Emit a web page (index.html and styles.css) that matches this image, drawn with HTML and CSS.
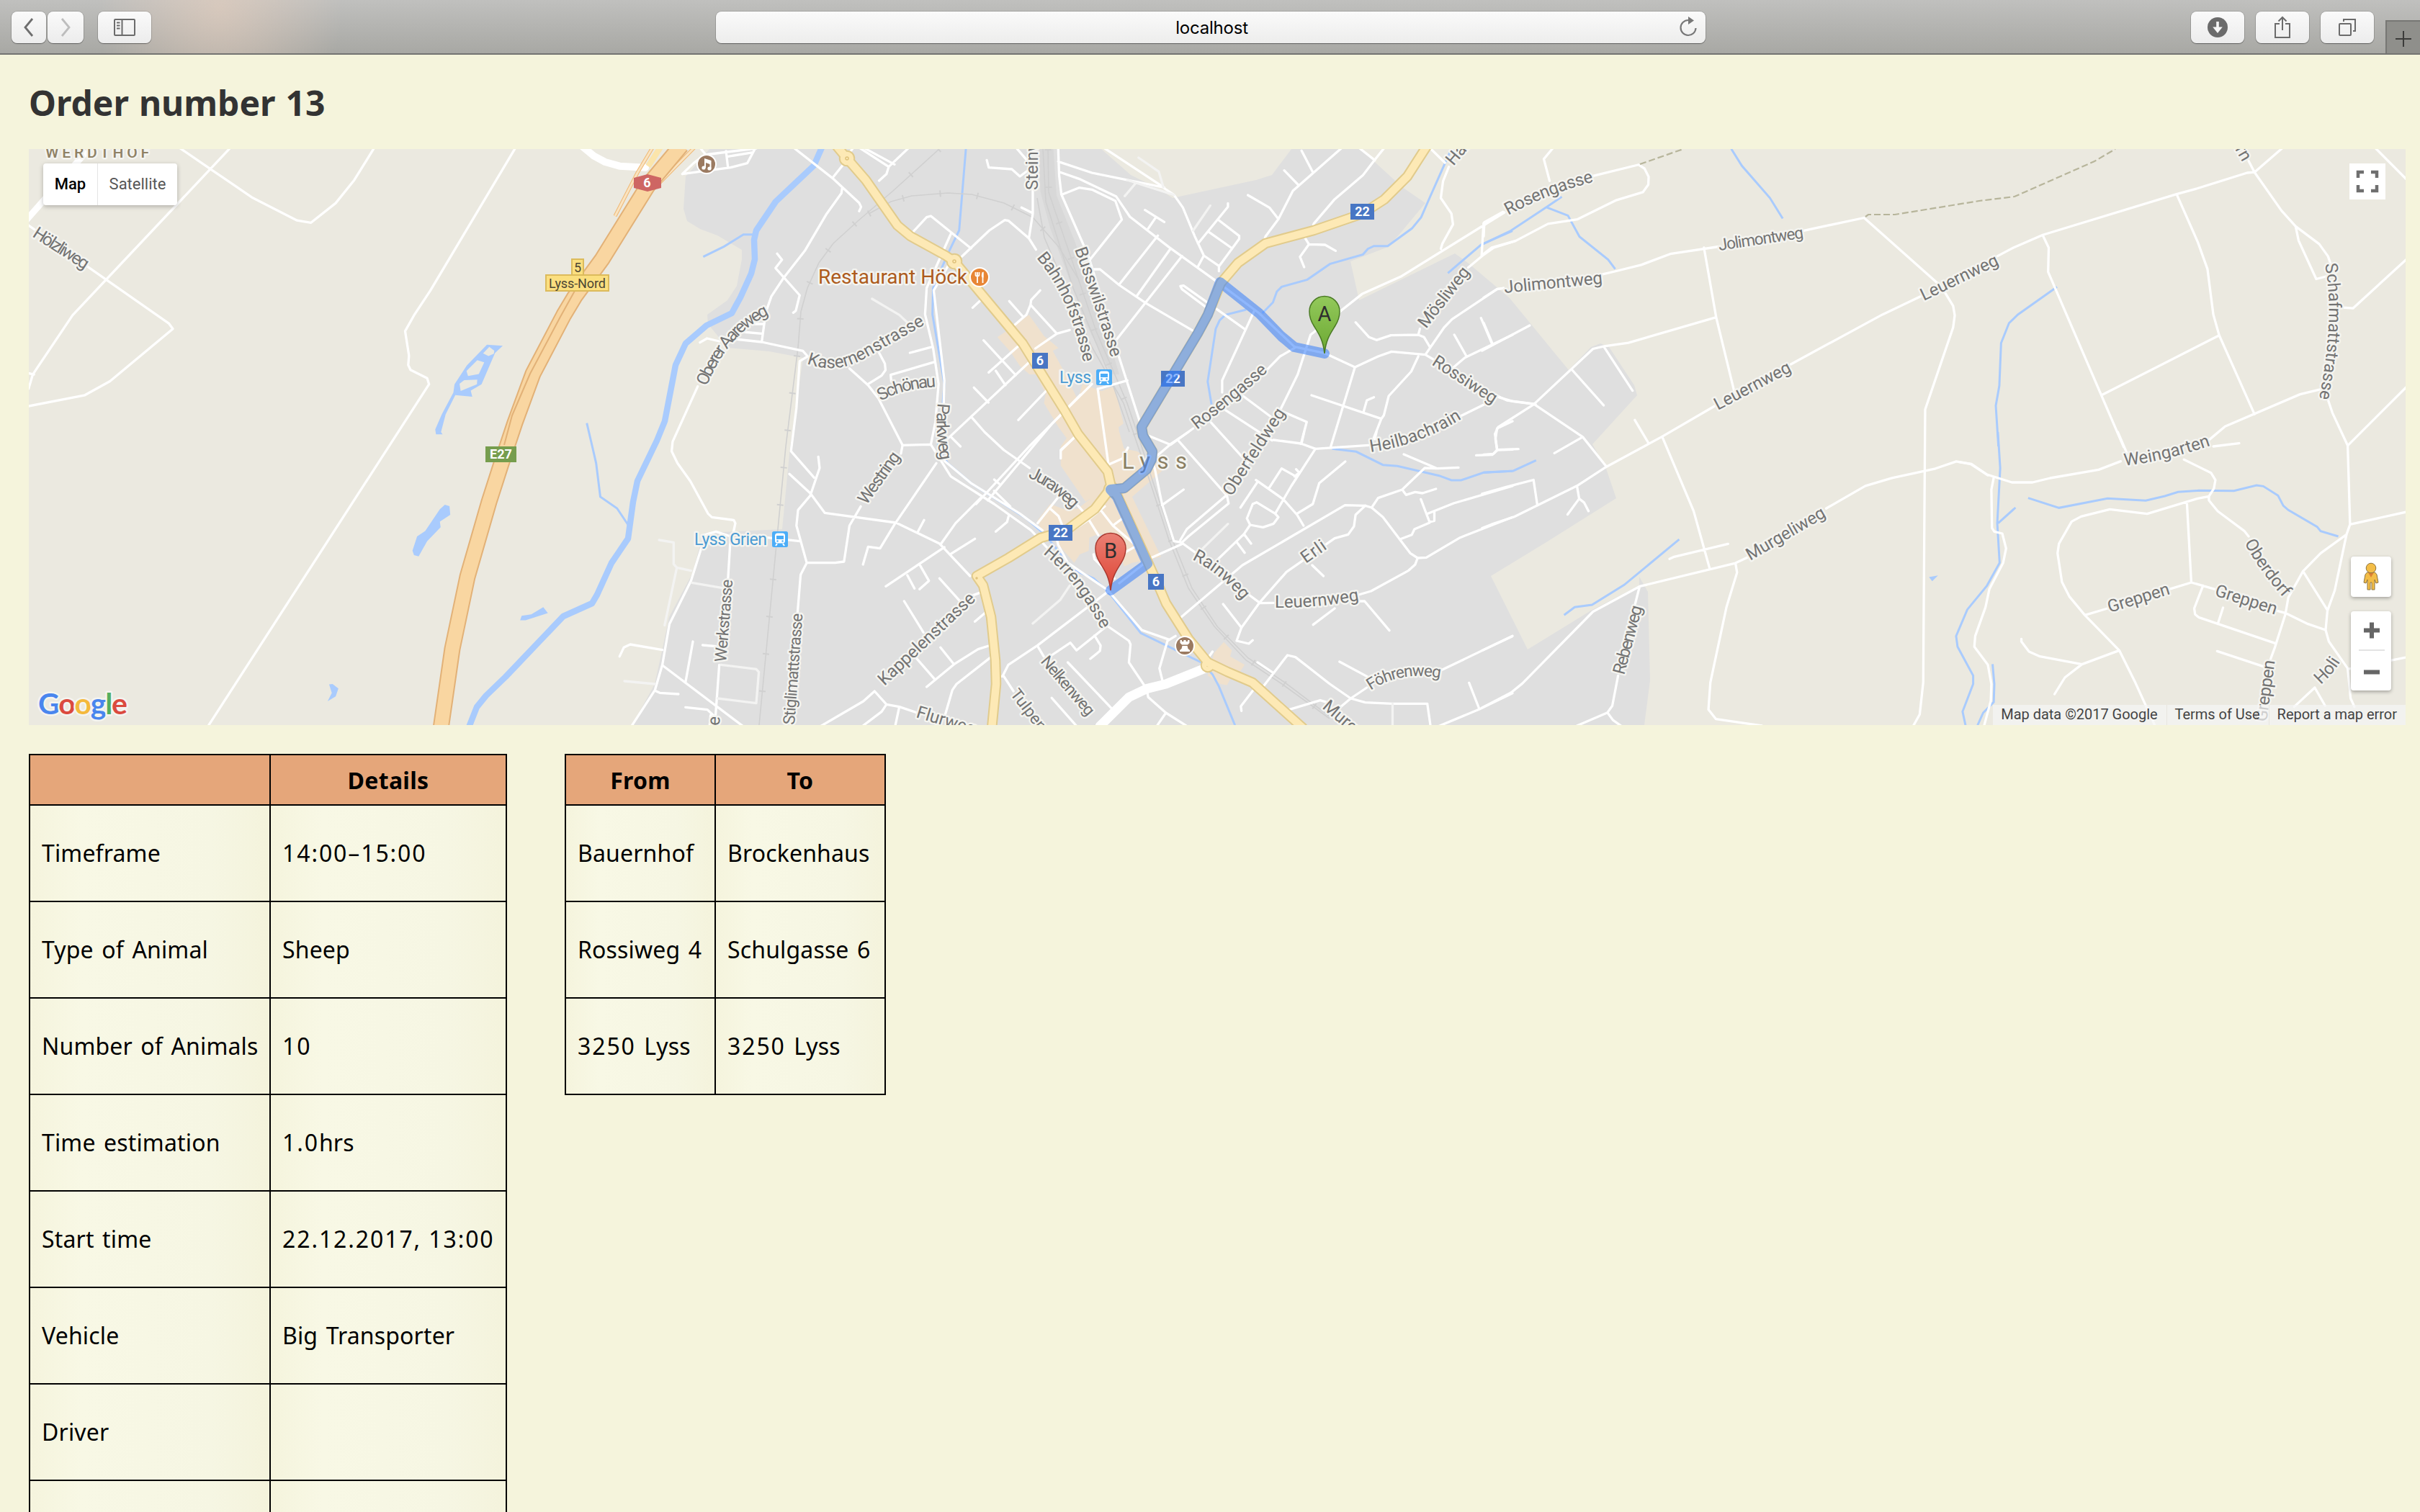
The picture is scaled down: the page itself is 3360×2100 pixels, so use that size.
FILE: index.html
```html
<!DOCTYPE html>
<html lang="en">
<head>
<meta charset="utf-8">
<title>Order number 13</title>
<link rel="stylesheet" href="styles.css">
</head>
<body>
<header class="toolbar">
  <div class="nav">
    <button class="btn back" aria-label="Back"><svg width="16" height="28" viewBox="0 0 16 28"><path d="M13 2 3 14l10 12" fill="none" stroke="#6e6e6e" stroke-width="2.8"/></svg></button>
    <button class="btn fwd" aria-label="Forward"><svg width="16" height="28" viewBox="0 0 16 28"><path d="M3 2l10 12L3 26" fill="none" stroke="#bdbdbd" stroke-width="2.8"/></svg></button>
    <button class="btn side" aria-label="Sidebar"><svg width="32" height="26" viewBox="0 0 32 26" fill="none" stroke="#6b6b6b" stroke-width="2"><rect x="2" y="2" width="28" height="22" rx="1"/><path d="M12.500 2v22M5 6.500h4.500M5 10.500h4.500M5 14.500h4.500"/></svg></button>
  </div>
  <div class="address"><span>localhost</span>
    <svg class="reload" width="26" height="30" viewBox="0 0 26 30"><path d="M13 5A10.500 10.500 0 1 0 23.500 16" fill="none" stroke="#777" stroke-width="2.200"/><path d="M13 0l8 5.500-8 5.500z" fill="#777"/></svg>
  </div>
  <div class="tools">
    <button class="btn" aria-label="Downloads"><svg width="30" height="30" viewBox="0 0 30 30"><circle cx="15" cy="15" r="14" fill="#6b6b6b"/><path d="M13.200 7h3.600v7.500h5L15 23l-6.800-8.500h5z" fill="#f7f7f7"/></svg></button>
    <button class="btn" aria-label="Share"><svg width="26" height="34" viewBox="0 0 26 34" fill="none" stroke="#6b6b6b" stroke-width="2"><path d="M9 12H3v19h20V12h-6M13 21V3M7.500 8.500 13 3l5.500 5.500"/></svg></button>
    <button class="btn" aria-label="Tabs"><svg width="26" height="26" viewBox="0 0 26 26" fill="none" stroke="#6b6b6b" stroke-width="2"><rect x="2" y="8" width="16" height="16" rx="1"/><path d="M8 5V2h16v16h-3"/></svg></button>
  </div>
  <button class="newtab" aria-label="New tab"><svg width="24" height="24" viewBox="0 0 24 24"><path d="M12 1v22M1 12h22" stroke="#3c3c3a" stroke-width="2"/></svg></button>
</header>

<main>
<h1>Order number 13</h1>

<div class="map">
<svg class="canvas" width="3300" height="800" viewBox="40 207 3300 800">
<defs>
  <linearGradient id="ga" x1="0" y1="0" x2="0" y2="1"><stop offset="0" stop-color="#93c95b"/><stop offset="1" stop-color="#6ba832"/></linearGradient>
  <linearGradient id="gb" x1="0" y1="0" x2="0" y2="1"><stop offset="0" stop-color="#ea8074"/><stop offset="1" stop-color="#de4434"/></linearGradient>
  <path id="p1" d="M44 328 130 383"/>
  <path id="p2" d="M981 537Q1012 460 1074 434"/>
  <path id="p3" d="M1120 505C1150 516 1175 512 1200 498L1298 443"/>
  <path id="p4" d="M1223 557Q1255 538 1310 537"/>
  <path id="p5" d="M1302 560Q1297 600 1308 650"/>
  <path id="p6" d="M1203 702 1258 624"/>
  <path id="p7" d="M1427 663Q1462 677 1496 715"/>
  <path id="p8" d="M1439 358Q1488 415 1506 513"/>
  <path id="p9" d="M1492 346Q1522 430 1546 507"/>
  <path id="p10" d="M1441 264V150"/>
  <path id="p11" d="M1662 597Q1716 556 1768 509"/>
  <path id="p12" d="M1710 690 1791 564"/>
  <path id="p13" d="M1903 628Q1975 618 2038 576"/>
  <path id="p14" d="M1987 506 2083 568"/>
  <path id="p15" d="M1980 457 2048 370"/>
  <path id="p16" d="M2018 231 2070 170"/>
  <path id="p17" d="M2094 299Q2150 268 2222 250"/>
  <path id="p18" d="M2089 407 2234 393"/>
  <path id="p19" d="M2387 348 2514 329"/>
  <path id="p20" d="M2385 570 2497 511"/>
  <path id="p21" d="M2671 418 2785 363"/>
  <path id="p22" d="M2430 779 2545 712"/>
  <path id="p23" d="M2255 938 2283 833"/>
  <path id="p24" d="M2950 647Q3010 640 3077 616"/>
  <path id="p25" d="M3116 754Q3139 796 3175 835"/>
  <path id="p26" d="M2929 851 3023 822"/>
  <path id="p27" d="M3074 827 3169 857"/>
  <path id="p28" d="M3147 1003 3160 908"/>
  <path id="p29" d="M3222 951Q3238 938 3252 915"/>
  <path id="p30" d="M3228 367Q3243 445 3218 563"/>
  <path id="p31" d="M3103 207 3125 245"/>
  <path id="p32" d="M1813 783 1850 757"/>
  <path id="p33" d="M1655 777Q1695 796 1731 841"/>
  <path id="p34" d="M1770 844Q1830 845 1896 832"/>
  <path id="p35" d="M1903 959Q1945 930 2006 943"/>
  <path id="p36" d="M1835 983 1930 1065"/>
  <path id="p37" d="M1448 769Q1495 806 1534 883"/>
  <path id="p38" d="M1444 919 1518 1005"/>
  <path id="p39" d="M1402 964 1480 1065"/>
  <path id="p40" d="M1271 996 1380 1029"/>
  <path id="p41" d="M1228 953 1362 827"/>
  <path id="p42" d="M1008 920 1018 797"/>
  <path id="p43" d="M1103 1007 1115 843"/>
  <path id="p44" d="M999 1008 1001 960"/>
</defs>

<rect x="40" y="207" width="3300" height="800" fill="#ebe9e0"/>
<!-- built-up area -->
<path fill="#dfdfdf" d="M985 207 970 225 952 245 949 290 954 307 972 318 996 327 1030 347V360L1023 397 1010 417 982 437 983 450 1010 483 1068 488 1115 497 1097 620 1086 735 979 740 972 757 961 797 929 857 920 900 909 950 878 1007H2283L2291 945 2288 822 2276 801V813L2209 848 2121 902 2070 800 2147 753 2244 692 2230 651 2211 617 2273 549 2269 535 2234 482 2222 477 2209 482 2178 514 2096 414 2038 365 2020 352 1887 417 1875 363 1927 343 1945 323 1979 282 1947 260 1889 207H1793L1766 243 1744 250 1628 275 1610 263 1570 243 1529 207Z"/>
<g fill="#f0e1cd">
  <path transform="translate(800 200) scale(.446429 .333333)" d="M1408 712 1455 800 1500 850 1482 862 1510 930 1560 1065 1575 1000 1634 1030 1674 1010 1702 1165 1687 1180 1694 1262H1545L1500 1180 1455 1080 1460 1040 1430 960 1410 960 1380 925 1350 865 1310 805 1365 755Z"/>
  <path transform="translate(1400 600) scale(.446429 .333333)" d="M195 0 163 60V140L240 290 258 275 215 320H170L130 300 90 370 100 400 150 460 205 545 222 510 250 495 252 440 280 425H330L360 560 385 545 440 530 475 520 385 270 480 160 460 130 400 80 360 70 345 0ZM670 875 695 910 690 935 735 970 715 1010 690 1030 680 1055 660 1050 620 1015 640 920Z"/>
</g>

<!-- water -->
<g class="water">
  <path class="river" d="M651 1010 662 982 675 966 702 940 782 856 822 838 829 826 849 782 872 748 879 697 885 668 912 612 923 585 938 507 952 477 981 452 1016 435 1028 413 1043 380 1048 360 1047 333 1050 320 1077 280 1130 230 1141 205"/>
  <g transform="translate(0 200) scale(.535714 .522959)">
    <path class="pond" d="M1262 533 1303 536 1283 555 1248 638 1220 655 1224 671 1180 667 1155 718 1143 765 1147 771H1130L1128 758 1145 718 1175 660 1178 638 1210 588ZM1268 539 1281 549 1280 557 1266 563 1252 556ZM1237 574 1255 580 1241 611 1213 616 1209 603ZM1203 627 1237 626 1236 638 1194 656 1191 637Z"/>
    <path class="pond" d="M1153 958 1165 962 1167 985 1140 1003 1142 1018 1107 1055 1085 1095 1073 1092 1069 1080 1081 1042 1102 1028 1140 970ZM1348 1265 1352 1253 1377 1249 1408 1230 1420 1246 1362 1265ZM853 1435 862 1434 877 1446 870 1467 849 1480 860 1458Z"/>
  </g>
  <path transform="translate(800 200) scale(.446429 .333333)" d="M395 470 460 427 520 377H555M33 1163 50 1260 62 1330 75 1470 127 1518 163 1590M1212 20 1191 360 1155 460 1110 600 1108 710 1145 1000 1140 1080 1125 1260 1155 1330 1230 1415 1330 1500 1400 1560 1460 1630"/>
  <path transform="translate(1400 200) scale(.446429 .333333)" d="M1378 20 1310 225 1284 305 1255 352 1180 425H1137L1118 437 1103 460 1000 500 930 565 850 595 835 615 823 660 790 705M740 690 675 712 657 735 645 770 620 990 632 1085M1367 538 1470 420 1568 362"/>
  <path transform="translate(1400 600) scale(.446429 .333333)" d="M115 430 155 495 200 572 265 610 310 665 412 838 515 905 600 960 635 1010 655 1060 705 1222M1007 70 1082 82 1165 137 1210 142 1340 182 1378 201H1408L1480 168 1568 163"/>
  <g transform="translate(2060 200) scale(.446429 .522959)"><path d="M-8 268 85 230 195 168 243 140M195 168 262 190 298 246 387 307 409 332M770 13 803 58 890 143 930 198M0 873 92 868 163 840M250 1251 283 1230 337 1224 437 1171 608 1050"/><path class="pond" d="M1385 1150 1413 1146 1395 1161Z"/></g>
  <path transform="translate(2720 0) scale(.408163 .395408)" d="M333 1008 200 1105 170 1135 143 1205 137 1355 125 1425 134 1568"/>
  <path transform="translate(2720 600) scale(.408163 .333333)" d="M132 0 140 150 130 380 138 545 95 640 28 740 -10 850 -5 895 48 1015V1050L12 1165 22 1222M192 315 133 380M235 275 340 316 505 277 635 286 700 267 745 250 815 244 935 245 1012 222 1035 226 1085 265 1103 307 1120 325 1218 395 1230 413 1290 435M114 967 120 1050 118 1125 82 1170 63 1222"/>
</g>

<!-- railway -->
<g class="rail">
  <path class="yard" transform="translate(1400 200) scale(.446429 .333333)" d="M95 20H140L150 215 205 400 300 760 345 960 320 960 240 745 130 350 100 200Z"/>
  <path class="line" d="M1304 207 1240 265 1191 307 1157 338 1137 365 1121 400 1112 433 1108 483 1091 620 1054 1007M1206 297 1237 280 1266 272 1316 268 1349 270 1394 282 1434 302 1470 343 1497 387"/>
  <path class="tie" d="M1304 207 1240 265 1191 307 1157 338 1137 365 1121 400 1112 433 1108 483 1091 620 1054 1007M1206 297 1237 280 1266 272 1316 268 1349 270 1394 282 1434 302 1470 343"/>
  <path class="line" d="M1440 275 1450 330 1480 400 1515 480 1560 560 1575 605 1596 667 1623 750 1650 817 1686 870 1730 917 1780 950 1846 998M1455 207 1456 267 1482 343 1522 460 1565 560 1581 607 1600 667 1628 750 1655 817 1690 870 1733 914 1784 948 1850 998M1448 207 1452 280 1490 400 1540 520 1568 600"/>
  <path class="tie" d="M1455 207 1456 267 1482 343 1520 460 1563 560 1579 607 1598 667 1626 750 1653 817 1688 870 1732 915 1782 949 1848 998"/>
</g>

<!-- minor streets -->
<g class="road">
  <g transform="translate(0 200) scale(.535714 .522959)">
    <path d="M465 10 545 66 655 143 770 203 806 209 870 157 918 96 970 10M597 10 188 455 85 612 74 650M70 608 88 612M70 213 438 477 448 491 285 630 220 667 70 697M1336 10 1115 390 1073 455 1050 497 1060 562 1058 587 1064 600 1107 622 1112 638 540 1545"/>
    <path class="w8" d="M220 25 70 200"/>
  </g>
  <g transform="translate(800 200) scale(.446429 .333333)">
    <path class="w10" d="M10 0 55 50 90 75 135 92 215 98"/>
    <path d="M330 125 365 80 400 45 560 18M330 125 480 98 532 80 556 20M466 30 472 98M472 52 550 35M388 20 400 40M676 15 797 142 880 245 886 262 880 280M797 142 840 70M827 185 825 205 777 295 712 443 645 558 607 635 590 700 577 825M625 457 640 482 620 517 695 630 683 695 675 703M583 750H520L513 765 518 783 577 790M385 827 407 810 445 822M460 808 577 825 705 862 720 885 695 905 685 1100 668 1280 740 1390M378 1010 300 1240 297 1280 315 1330 355 1405 410 1540 422 1555 490 1567 495 1580 487 1630"/>
    <path d="M850 935 908 1005 940 1060 1015 1255M940 865 960 915 962 942 950 965 908 1000M1115 908 978 962 980 990M1038 870 1108 845M1130 480 1090 600 1085 710 1110 850 1127 1000 1117 1160 1103 1252M1165 375 1130 480M1045 370 1090 305 1103 300 1228 435M1200 468 1285 360 1333 317 1345 320 1408 393 1420 290V190M1385 265 1420 288M1408 393 1430 440M1160 500 1112 610 1145 985 1143 1080"/>
    <path d="M880 15 972 95 1035 15M900 20 990 85M972 95 965 125 942 153M862 15 840 55M1277 67 1283 98 1355 105 1380 135 1410 105M1368 15 1400 65M1443 610 1415 650 1413 670 1400 712 1365 752M1347 655 1390 720M1413 670 1495 790 1428 852M1495 790 1535 775M1265 642 1233 682M1267 818 1367 963M1385 830 1283 952M1420 895 1150 1235M1305 945 1335 1005M1237 1015 1282 1077M1475 1010 1375 1150M1568 1045 1480 1165 1280 1485M1232 1142 1270 1200 1330 1275 1410 1350M1165 1220 1195 1260"/>
    <path class="faint" d="M920 645 1005 712 1035 750"/>
  </g>
  <g transform="translate(800 600) scale(.446429 .333333)">
    <path d="M663 175 728 255 773 337 995 378 1130 465 1225 600M753 103 757 150 728 265 690 325 685 390 717 545H805L833 540 850 390 885 310M1010 90 1015 55 1103 52 1165 185 1300 300 1415 410 1470 490M1120 130 990 385 945 485 908 478 892 552M1145 120 1230 215 1380 340 1450 410M1258 275 1180 380 1135 465M1345 350 1340 375 1305 415M1300 198 1315 215M1300 245 1350 310M1568 0 1507 75V110M1500 270 1435 380M1475 320 1500 350 1512 390M595 440 695 455M717 545 698 595 688 760M480 440 472 615M390 480 357 620 290 800 268 970 245 1075 170 1230M395 430 435 415 480 435"/>
    <path d="M268 908 168 885 148 898 135 935M245 1078 260 1087 318 1092M268 972 518 1225M363 873 340 1043M393 888 435 893M445 970 433 1190M415 1222 418 1180M340 1147 408 1157 430 1185M1082 367 1063 415M1240 445 1165 508M1145 480 963 643M1030 597 1052 652M1070 557 1097 620 1068 655M1130 610 1197 710M1255 670 1235 680M1275 750 1240 790M1020 705 1080 835M1050 930 1115 1030M1290 888 1250 905 1175 968 1090 1062M1133 898 1175 968M1290 938 1183 1050 1170 1075 1145 1190M928 1080 893 1122 760 1226M928 1080 965 1135 1005 1145 1060 1170M965 1135 950 1165 890 1226M1005 1145 992 1226M1320 1018H1330L1360 1080"/>
    <path class="faint" d="M360 628 455 650M258 450 303 460V550L313 565 357 578M313 565 275 805M150 1038 245 1050M450 970 560 988 568 1000 560 1130 440 1110M1535 640 1505 700 1420 798"/>
  </g>
  <g transform="translate(1400 200) scale(.446429 .333333)">
    <path d="M155 15 158 130 165 210 250 470 345 890 455 1350 478 1500M155 73 260 120 480 180 515 212 543 265 580 385 608 465 590 510M296 15 485 182M160 117 220 145 335 218 378 303 500 430 640 565M168 210 220 182 260 190 333 237 353 315 255 480M425 275 485 325M458 307 435 352M465 382 345 585M505 435 400 632M540 467 325 835M265 522H285L345 588 430 665 583 785M683 247V262L590 415M655 318 718 383V395L655 510V530M625 368 693 432M608 465 655 508M745 213 812 265 840 313M797 398 800 385 840 313 885 195 1038 15M912 28 948 120M858 110 903 172M947 345 950 332 1015 230 1103 130 1140 65 1170 15M1090 15 1140 68M920 385 935 418 985 420 1018 445M935 418 907 470 920 513M737 773 545 590 535 592 540 605 620 685"/>
    <path d="M1310 15 1358 78M1370 95 1352 155 1345 225 1378 290 1383 335 1350 415 1345 437M1543 285 1220 553 1100 625 940 795 900 960 845 1110M1478 330 1472 465M765 695 665 985V1035M665 1100 820 1235M730 1050 820 1140M890 850 845 885 805 940M630 1160 745 1330M575 1185 505 1253 435 1215M845 1110 928 1158 910 1250M640 565 780 705 890 845 985 872 1078 930 1150 885 1192 865 1297 878 1325 900M1078 930 1003 1260M943 1047 1160 1145M1105 1115 1115 1068 1137 1055M1275 885 1253 948 1183 1050 1168 1130 1160 1145 1135 1230M1080 743 1122 805 1145 817 1190 797 1275 795 1293 805 1312 848M1275 795 1280 770M1297 878 1355 765 1380 730 1520 605 1540 600M1470 725 1505 835M1385 930 1420 890 1568 795M1387 795 1425 885M1430 515 1475 465 1510 432 1575 405M1525 1055 1568 1072 1640 1085M1480 1085 1405 1135M1568 1155 1520 1185 1515 1230 1520 1275M278 1020 313 1350M260 1000 65 1260 -100 1500M215 1210 165 1275M370 985 280 1020"/>
    <path class="faint" d="M628 257 575 360M405 57 468 115 482 180M362 217 395 165M370 150 515 212"/>
  </g>
  <g transform="translate(1400 600) scale(.446429 .333333)">
    <path d="M313 135 355 110 372 65M478 300 515 455 540 460M505 50 560 0M505 50 440 125M530 38 680 265 685 298 560 435 540 460M680 262 555 405 535 450M545 240 478 305M543 465 610 530M745 675 783 713 825 712M443 525 543 465M825 33 910 48 955 70 1120 55M955 70 880 225 830 340 840 355 825 382 792 397 752 387 742 360 760 300 772 293 830 340M920 0 912 48M1145 0 1140 30M770 200 855 280 898 345 918 390M775 208 722 315M810 235 850 152 898 188M895 155 905 170 890 185M1048 123 967 213 947 300 898 340M752 387 733 425 652 530M733 425 755 465M710 458 735 503M530 780 728 555 1047 305 1110 307 1130 315 1165 355 1250 505 1273 525 1300 523 1405 440 1568 355"/>
    <path d="M1110 307 1080 345 1075 393 1057 427 1015 443 865 583 780 713 725 815 710 870 748 882 760 868M668 717 725 815M945 555 980 600M1273 525 1265 553 1245 577 1128 663 1090 678M1090 705H1108L1185 827M1015 735 948 803M1130 315 1150 275 1225 240 1295 150 1335 152 1400 148M1230 93 1330 150M1225 240 1237 262 1265 250 1288 255 1330 237M1568 225 1385 297 1305 340M1283 280 1310 375 1325 370V335M1310 378 1263 405 1255 428 1218 447M1455 97 1505 95 1522 75 1568 73M1568 850 1335 1000M1030 957 1120 1022M1115 1065 1065 1110 1025 1155M1065 1110 1000 1050 893 938 868 930 790 1065M775 960 820 1000M1065 1110 1110 1127 1195 1132H1303L1313 1225M1568 1088 1465 1155 1340 1225M1433 1045 1465 1155M873 1157 970 1118 1000 1130M763 1073 723 1143 725 1162"/>
    <path d="M500 865 415 825 310 660 185 545 155 470 148 430M520 850 495 870 470 985 480 1040M310 665 90 890 0 970 -18 1018M90 890 110 935M310 810 375 870 380 885 375 960 430 1070 435 1105 490 1170 555 1225M490 1170 462 1225M300 815 212 910 193 878 135 930M268 848 287 890 285 912 255 945M185 960 320 1150M135 1108 212 1225M290 330 325 390 395 470M250 365 280 430M325 390 355 360M300 310 245 370 200 410M365 500 398 475M215 305 235 335M265 510 268 530 330 610M345 630 430 540M635 915 625 935"/>
    <path class="faint" d="M683 383 605 485M1195 1132V1222"/>
    <path class="w14" d="M285 1225 375 1105 430 1070 490 1050 620 980"/>
  </g>
  <g transform="translate(2060 200) scale(.446429 .522959)">
    <path d="M218 8 187 40 205 98M340 85 482 55 500 65 513 87 512 108 495 128 410 150 292 200 200 212 100 257 25 275 -5 295M60 180 2 208 0 245M0 408 42 385 62 383M370 346 410 338 490 321 580 292 735 272M995 230 1183 196 1412 370M685 275 723 460 780 660M723 460 450 528 375 537 340 544 155 692 45 752 35 770 42 812 30 823 0 825M42 812 108 810M0 475 28 532M-5 549 143 482M273 598 373 694M375 540 463 655M40 668 72 681 155 690 308 778 382 857M308 778 220 821M955 585 1240 453 1370 400M720 695 555 777 382 857 290 908 95 990 25 1010 -5 1020M470 733 513 795M555 777 653 975 703 1128M578 1102 590 1097 760 1062M290 908 297 942 261 984M297 942 312 952 326 975M-5 929 70 911 155 892 167 960"/>
    <path d="M-5 1497 85 1457 120 1433 340 1242 485 1175 783 1113 820 1098M783 1113 788 1138 755 1230 705 1430 699 1502 722 1527 865 1545M485 1175 470 1225M418 1412 400 1492 385 1510 290 1545M385 1510 402 1530 430 1547M1065 968 1187 908 1270 887 1405 862 1470 843 1515 850 1568 880M1435 395 1460 430 1465 455 1460 487 1373 705 1367 1430 1356 1515 1335 1547M-5 1345 88 1308"/>
  </g>
  <g transform="translate(2720 0) scale(.408163 .395408)">
    <path d="M130 900 185 870 285 825 740 682 810 662 980 607 1005 605 1100 520M985 565 1005 605 1097 740 1145 795 1225 857 1255 900 1265 930M1145 795 1155 845 1215 980 1260 968M285 827 305 870 303 955 560 1570M740 682 812 850 845 945 865 1105 885 1178 1005 1455M885 1178 485 1388M1228 1368 1160 1385 905 1498 845 1550M1416 520 1525 633M1525 908 1340 1083 1305 1080M1253 1398 1270 1450 1322 1565 1525 1356M865 1568 953 1557"/>
  </g>
  <g transform="translate(2720 600) scale(.408163 .333333)">
    <path d="M0 125 42 133 95 177 180 210H250L310 192 475 157 550 122M540 0 570 85M765 115 857 170 872 200 867 235 850 268V285L880 330 970 412 985 435M850 268 812 277 640 341 513 322 415 352 383 373 340 465 335 505 350 625 375 685 428 763 545 910 600 1045 667 1225M775 292 790 627 715 655M790 627 870 655M428 763 505 735M545 910 418 968 275 935 238 915 212 873V862M418 968 360 1023 325 1092M830 640 800 735 803 760 815 772 1075 880M898 732 880 800M1075 743 1112 755 1187 800 1247 825M878 913 1035 977M1120 690 1110 760 1075 895 1060 945M1120 690 1170 580 1230 505 1318 427 1330 385 1322 55M1330 385 1525 332M1318 427 1278 660 1253 745 1247 825 1258 873 1322 985 1332 1110 1345 1145M1170 580 1253 742M1322 988 1525 938M1210 1065 1140 1145M1210 1065 1245 1140"/>
    <path d="M118 190 110 240 112 400 120 415 147 423 160 485 150 545 103 655 90 730 55 850 52 895 98 970 110 1050 108 1120 85 1225"/>
  </g>
</g>
<g class="track">
  <path d="M2277 228 2337 207M2590 301 2594 298H2631L2748 279 2797 273 2908 224 2937 207"/>
</g>

<!-- main roads -->
<g class="main case">
  <path d="M1155 195 1176 220 1202 250 1246 313 1264 328 1313 355 1325 363 1420 477 1478 570 1497 603 1538 655 1543 677 1552 690 1592 777 1610 817 1619 838 1650 887 1677 920 1704 933 1739 948 1810 1012"/>
  <path d="M1543 677 1520 707 1480 737 1445 747 1400 775 1356 800 1365 813 1376 857 1382 917 1383 950 1377 1012M1981 203 1954 245 1922 277 1891 297 1824 320 1757 338 1719 365 1695 393 1677 437 1663 463 1585 593 1587 605 1600 627 1599 638 1592 652 1561 678 1543 680"/>
  <circle cx="1176" cy="220" r="4"/><circle cx="1325" cy="363" r="4"/><circle cx="1543" cy="680" r="4"/><circle cx="1677" cy="924" r="3"/>
</g>
<g class="main">
  <path d="M1155 195 1176 220 1202 250 1246 313 1264 328 1313 355 1325 363 1420 477 1478 570 1497 603 1538 655 1543 677 1552 690 1592 777 1610 817 1619 838 1650 887 1677 920 1704 933 1739 948 1810 1012"/>
  <path d="M1543 677 1520 707 1480 737 1445 747 1400 775 1356 800 1365 813 1376 857 1382 917 1383 950 1377 1012M1981 203 1954 245 1922 277 1891 297 1824 320 1757 338 1719 365 1695 393 1677 437 1663 463 1585 593 1587 605 1600 627 1599 638 1592 652 1561 678 1543 680"/>
  <circle cx="1176" cy="220" r="4"/><circle cx="1325" cy="363" r="4"/><circle cx="1543" cy="680" r="4"/><circle cx="1677" cy="924" r="3"/>
</g>
<g fill="none" stroke="#dfc27c" stroke-width="1.500"><circle cx="1176" cy="220" r="2"/><circle cx="1325" cy="363" r="2"/><circle cx="1356" cy="803" r="1"/></g>

<!-- motorway -->
<g fill="none" stroke-linejoin="round">
  <path d="M900 231 918 203" stroke="#fbe5ab" stroke-width="8"/>
  <path d="M854 300 885 240 906 205M862 320 895 275 966 203" stroke="#efb873" stroke-width="5"/>
  <path d="M854 300 885 240 906 205M862 320 895 275 966 203" stroke="#fae3c0" stroke-width="3"/>
  <path d="M946 202 900 257 867 310 836 360 798 412 783 437 740 519 715 587 696 644 679 697 649 801 628 901 612 1012" stroke="#e2b177" stroke-width="23"/>
  <path d="M946 202 900 257 867 310 836 360 798 412 783 437 740 519 715 587 696 644 679 697 649 801 628 901 612 1012" stroke="#f9d6a1" stroke-width="19"/>
  <path d="M798 404 778 440 736 519 711 577 700 618" stroke="#e2b177" stroke-width="2"/>
</g>

<!-- place names under the route -->
<text class="city" x="1558" y="651" textLength="90">Lyss</text>

<!-- road shields -->
<g class="shield">
  <g fill="#4876c4"><rect x="1875" y="283" width="33" height="22"/><rect x="1612" y="515" width="33" height="22"/><rect x="1433" y="490" width="22" height="22"/><rect x="1456" y="729" width="33" height="22"/><rect x="1594" y="797" width="22" height="22"/></g>
  <rect x="674" y="620" width="43" height="22" fill="#769d4d"/>
  <path d="M880 247 899 242 918 247V261L899 266 880 261Z" fill="#ce6663"/>
  <text x="1891.500" y="300">22</text><text x="1628.500" y="532">22</text><text x="1444" y="507">6</text><text x="1472.500" y="746">22</text><text x="1605" y="814">6</text><text x="695.500" y="637">E27</text><text x="898.500" y="260">6</text>
</g>
<g class="exit">
  <rect x="794" y="360" width="16" height="22"/><rect x="758" y="382" width="87" height="22"/>
  <text x="802" y="378">5</text><text x="801.500" y="400" textLength="79">Lyss-Nord</text>
</g>

<!-- route -->
<path class="route" d="M1839 491 1797 482 1779 467 1748 435 1694 392 1677 437 1663 463 1585 593 1587 605 1600 627 1599 638 1592 652 1561 678 1542 680 1551 690 1593 783 1542 820"/>

<!-- street names: a halo layer below the letters -->
<g class="halo"><use href="#names"/></g>
<g id="names" class="label">
  <text class="district" x="63" y="219" textLength="144">WERDTHOF</text>
  <text textLength="87"><textPath href="#p1">Hölzliweg</textPath></text>
  <text textLength="136"><textPath href="#p2">Oberer Aareweg</textPath></text>
  <text textLength="180"><textPath href="#p3">Kasernenstrasse</textPath></text>
  <text textLength="80"><textPath href="#p4">Schönau</textPath></text>
  <text textLength="80"><textPath href="#p5">Parkweg</textPath></text>
  <text textLength="83"><textPath href="#p6">Westring</textPath></text>
  <text textLength="77"><textPath href="#p7">Juraweg</textPath></text>
  <text textLength="161"><textPath href="#p8">Bahnhofstrasse</textPath></text>
  <text textLength="159"><textPath href="#p9">Busswilstrasse</textPath></text>
  <text textLength="98"><textPath href="#p10">Steinweg</textPath></text>
  <text textLength="128"><textPath href="#p11">Rosengasse</textPath></text>
  <text textLength="139"><textPath href="#p12">Oberfeldweg</textPath></text>
  <text textLength="136"><textPath href="#p13">Heilbachrain</textPath></text>
  <text textLength="102"><textPath href="#p14">Rossiweg</textPath></text>
  <text textLength="100"><textPath href="#p15">Mösliweg</textPath></text>
  <text><textPath href="#p16">Hard</textPath></text>
  <text textLength="128"><textPath href="#p17">Rosengasse</textPath></text>
  <text textLength="137"><textPath href="#p18">Jolimontweg</textPath></text>
  <text class="sm" textLength="119"><textPath href="#p19">Jolimontweg</textPath></text>
  <text textLength="117"><textPath href="#p20">Leuernweg</textPath></text>
  <text textLength="117"><textPath href="#p21">Leuernweg</textPath></text>
  <text textLength="123"><textPath href="#p22">Murgeliweg</textPath></text>
  <text textLength="98"><textPath href="#p23">Rebenweg</textPath></text>
  <text textLength="123"><textPath href="#p24">Weingarten</textPath></text>
  <text textLength="94"><textPath href="#p25">Oberdorf</textPath></text>
  <text textLength="89"><textPath href="#p26">Greppen</textPath></text>
  <text textLength="89"><textPath href="#p27">Greppen</textPath></text>
  <text textLength="86"><textPath href="#p28">Greppen</textPath></text>
  <text><textPath href="#p29">Holi</textPath></text>
  <text textLength="188"><textPath href="#p30">Schafmattstrasse</textPath></text>
  <text><textPath href="#p31">rn</textPath></text>
  <text textLength="37"><textPath href="#p32">Erli</textPath></text>
  <text textLength="91"><textPath href="#p33">Rainweg</textPath></text>
  <text textLength="118"><textPath href="#p34">Leuernweg</textPath></text>
  <text class="sm" textLength="101"><textPath href="#p35">Föhrenweg</textPath></text>
  <text><textPath href="#p36">Murgeliweg</textPath></text>
  <text textLength="134"><textPath href="#p37">Herrengasse</textPath></text>
  <text class="sm" textLength="101"><textPath href="#p38">Nelkenweg</textPath></text>
  <text class="sm"><textPath href="#p39">Tulpenweg</textPath></text>
  <text><textPath href="#p40">Flurweg</textPath></text>
  <text textLength="175"><textPath href="#p41">Kappelenstrasse</textPath></text>
  <text class="sm" textLength="115"><textPath href="#p42">Werkstrasse</textPath></text>
  <text class="sm" textLength="155"><textPath href="#p43">Stiglimattstrasse</textPath></text>
  <text><textPath href="#p44">e</textPath></text>
  <text class="stop" x="1471" y="532" textLength="44">Lyss</text>
  <text class="stop" x="964" y="757" textLength="101">Lyss Grien</text>
  <text class="food" x="1136" y="394" textLength="207">Restaurant Höck</text>
</g>

<!-- points of interest -->
<g>
  <g transform="translate(1522 513)"><rect width="22" height="22" rx="2.500" fill="#4badf8"/><rect x="4" y="2.500" width="14" height="14" rx="3.500" fill="#fff"/><rect x="6" y="6" width="10" height="5" fill="#4badf8"/><path d="M7.500 13.500h.1M14.500 13.500h.1" stroke="#4badf8" stroke-width="2.400" stroke-linecap="round"/><path d="M7 17 5 20M15 17l2 3" stroke="#fff" stroke-width="2"/></g>
  <g transform="translate(1072 738)"><rect width="22" height="22" rx="2.500" fill="#4badf8"/><rect x="4" y="2.500" width="14" height="14" rx="3.500" fill="#fff"/><rect x="6" y="6" width="10" height="5" fill="#4badf8"/><path d="M7.500 13.500h.1M14.500 13.500h.1" stroke="#4badf8" stroke-width="2.400" stroke-linecap="round"/><path d="M7 17 5 20M15 17l2 3" stroke="#fff" stroke-width="2"/></g>
  <g stroke="#fff" stroke-width="2"><circle cx="981" cy="228" r="13" fill="#9b7a61"/><circle cx="1360" cy="385" r="13" fill="#e88635"/><circle cx="1645" cy="897" r="13" fill="#9b7a61"/></g>
  <g fill="#fff"><circle cx="977" cy="233" r="2.600"/><circle cx="985" cy="234" r="2.600"/><path d="M978 220 987.500 223V234H985.500V228L980 226V233H978Z"/></g>
  <path d="M1354.500 378v4c0 2 5 2 5 0v-4M1357 378v15M1364.500 378v15" fill="none" stroke="#fff" stroke-width="1.800"/><path d="M1365.500 377.500c-3 1-3.500 7-1.500 8h1.500z" fill="#fff"/>
  <path d="M1638.500 889h2.500v2h2.400v-2h3.200v2h2.400v-2h2.500v4l-2.500 2.500h-8l-2.500-2.500zM1641.500 897h7l1 4 2.500 2v2h-14v-2l2.500-2z" fill="#fff"/>
</g>

<!-- route end markers -->
<g class="marker">
  <g transform="translate(1839 491)"><path d="M0 0C-2-20-9-29-14.500-38-19-45-21-50-21-58.500A21 21 0 0 1 21-58.500C21-50 19-45 14.500-38 9-29 2-20 0 0Z" fill="url(#ga)" stroke="#4a7a24"/><text y="-45">A</text></g>
  <g transform="translate(1542 820)"><path d="M0 0C-2-20-9-29-14.500-38-19-45-21-50-21-58.500A21 21 0 0 1 21-58.500C21-50 19-45 14.500-38 9-29 2-20 0 0Z" fill="url(#gb)" stroke="#a83a30"/><text y="-45">B</text></g>
</g>
<text class="brand" x="53" y="992" textLength="124"><tspan fill="#4a86ee">G</tspan><tspan fill="#db4a3e">o</tspan><tspan fill="#f4b93c">o</tspan><tspan fill="#4a86ee">g</tspan><tspan fill="#55ae5f">l</tspan><tspan fill="#db4a3e">e</tspan></text>
</svg>

  <div class="maptype"><span class="on">Map</span><span>Satellite</span></div>
  <div class="full"><svg width="32" height="32" viewBox="0 0 32 32"><path d="M3 11V3h8M21 3h8v8M29 21v8h-8M11 29H3v-8" fill="none" stroke="#6f6f6f" stroke-width="4.500"/></svg></div>
  <div class="pegman"><svg width="24" height="40" viewBox="0 0 24 40"><path d="M6.500 14h11l2.500 3 2 11-3 1-2-5v14H13V28h-2v10H7V24l-2 5-3-1 2-11z" fill="#f3bd47" stroke="#8d7440"/><path d="M8 14h8l-4 7z" fill="#dc7f34"/><circle cx="12" cy="8" r="6.800" fill="#f3bd47" stroke="#8d7440"/></svg></div>
  <div class="zoom"><svg width="22" height="54" viewBox="0 0 22 54"><path d="M0 11h22M11 0v22" stroke="#666" stroke-width="6"/></svg><hr><svg width="22" height="54" viewBox="0 0 22 54"><path d="M0 29h22" stroke="#666" stroke-width="6"/></svg></div>
  <div class="credits"><span>Map data ©2017 Google</span><span>Terms of Use</span><span>Report a map error</span></div>
</div>

<div class="tables">
  <table class="details">
    <colgroup><col class="c1"><col class="c2"></colgroup>
    <tr><th></th><th>Details</th></tr>
    <tr><td>Timeframe</td><td class="num">14:00–15:00</td></tr>
    <tr><td>Type of Animal</td><td>Sheep</td></tr>
    <tr><td>Number of Animals</td><td class="num">10</td></tr>
    <tr><td>Time estimation</td><td><span class="num">1.0</span>hrs</td></tr>
    <tr><td>Start time</td><td class="num">22.12.2017, 13:00</td></tr>
    <tr><td>Vehicle</td><td>Big Transporter</td></tr>
    <tr><td>Driver</td><td></td></tr>
    <tr><td></td><td></td></tr>
  </table>
  <table class="places">
    <colgroup><col class="c3"><col class="c4"></colgroup>
    <tr><th>From</th><th>To</th></tr>
    <tr><td>Bauernhof</td><td>Brockenhaus</td></tr>
    <tr><td>Rossiweg 4</td><td>Schulgasse 6</td></tr>
    <tr><td><span class="num">3250</span> Lyss</td><td><span class="num">3250</span> Lyss</td></tr>
  </table>
</div>
</main>
</body>
</html>
```
FILE: styles.css
```css
* { box-sizing: border-box; }
html, body { margin: 0; height: 2100px; overflow: hidden; }
body { background: #f5f4dc; font-family: "Noto Sans", sans-serif; color: #000; }

.toolbar {
  height: 76px; padding: 16px 0 0 16px; display: flex; align-items: flex-start;
  background:
    radial-gradient(ellipse 170px 190px at 305px 10px, rgba(232,208,190,.6), rgba(232,208,190,0)),
    linear-gradient(#c0c0be, #a8a8a4);
  border-bottom: 2px solid #747472;
}
.nav { display: flex; width: 978px; }
.btn {
  height: 44px; width: 74px; padding: 0; border: 0; border-radius: 8px;
  background: linear-gradient(#fafafa, #ececec);
  box-shadow: 0 0 0 1px rgba(0,0,0,.12), 0 1px 1px rgba(0,0,0,.35);
  display: flex; align-items: center; justify-content: center;
}
.back { width: 48px; margin-right: 2px; }
.fwd { width: 50px; margin-right: 20px; }
.address {
  width: 1374px; height: 44px; border-radius: 8px; background: linear-gradient(#fafafa, #ededec);
  box-shadow: 0 0 0 1px rgba(0,0,0,.12), 0 1px 1px rgba(0,0,0,.35);
  display: flex; align-items: center; justify-content: flex-end; padding-right: 11px;
  font: 24px/44px Inter, sans-serif;
}
.address span { flex: 1; text-align: center; padding: 2px 0 0 40px; letter-spacing: -.2px; }
.address .reload { margin-top: -1px; }
.tools { display: flex; gap: 16px; margin-left: 674px; width: 270px; }
.newtab {
  width: 48px; height: 46px; margin-top: 12px; padding: 4px 0 0; border: 2px solid #777774; border-width: 2px 0 0 2px;
  background: #8f8f8b; display: flex; align-items: center; justify-content: center;
}

main { padding: 0 20px 0 40px; }
h1 { margin: 0; height: 131px; line-height: 133px; font-size: 48px; font-weight: 700; color: #333; word-spacing: 1.5px; }

.map { position: relative; height: 800px; overflow: hidden; font-family: Roboto, sans-serif; }
.canvas { display: block; font-family: Roboto, sans-serif; }
.canvas path { vector-effect: non-scaling-stroke; }
.water path { fill: none; stroke: #a9cbfd; stroke-width: 3; }
.water .river { stroke-width: 8.500; stroke-linejoin: round; }
.water .pond { fill: #a9cbfd; stroke: none; fill-rule: evenodd; }
.rail path { fill: none; }
.rail .yard { fill: #d8d8d8; }
.rail .line { stroke: #d0d0d0; stroke-width: 1.600; }
.rail .tie { stroke: #d0d0d0; stroke-width: 9; stroke-dasharray: 2 50; }
.road path { fill: none; stroke: #fff; stroke-width: 3.300; stroke-linecap: round; stroke-linejoin: round; }
.road .faint { stroke: #f3f3f2; }
.road .w8 { stroke-width: 9; }
.road .w10 { stroke-width: 10; }
.road .w14 { stroke-width: 13; }
.track path { fill: none; stroke: #b7b59b; stroke-width: 2.200; stroke-dasharray: 9 4; }
.main { fill: none; stroke: #fde9b5; stroke-linejoin: round; }
.main path, .main circle { stroke-width: 10.500; }
main .main { padding: 0; }
.case { stroke: #e1cb8c; }
.case path, .case circle { stroke-width: 14.500; }
.route { fill: none; stroke: #3a80fa; stroke-width: 14; stroke-opacity: .57; stroke-linecap: round; stroke-linejoin: round; }

.halo { stroke: #f4f4f0; stroke-width: 5px; stroke-linejoin: round; }
.city, .brand { paint-order: stroke; stroke: #f4f4f0; stroke-width: 5px; stroke-linejoin: round; }
.label text { font-size: 24px; fill: #737373; }
.label .sm { font-size: 22.500px; }
.label .district { font-size: 21px; fill: #8f8165; font-weight: 500; }
.city { font-size: 31px; fill: #8a7e62; }
.label .stop { fill: #4b9bd3; font-size: 23px; }
.label .food { fill: #ad5b1d; font-size: 28px; }
.shield text { font-size: 18px; font-weight: 700; fill: #fff; text-anchor: middle; }
.exit rect { fill: #fbdf7f; stroke: #dcbb5c; stroke-width: 2; }
.exit text { font-size: 18px; fill: #4c4634; text-anchor: middle; }
.marker path { stroke-width: 1.500; }
.marker text { font-size: 29px; text-anchor: middle; fill: #2e2e2e; }
.brand { font-family: Lato, sans-serif; font-size: 41px; font-weight: 700; }

.maptype {
  position: absolute; left: 20px; top: 20px; width: 186px; height: 58px; display: flex;
  background: #fff; border-radius: 4px; box-shadow: 0 2px 6px rgba(0,0,0,.25);
  font-size: 22px; line-height: 58px; color: #565656;
}
.maptype span { flex: 1; text-align: center; }
.maptype .on { flex: 0 0 76px; color: #000; font-weight: 500; border-right: 1px solid #e4e4e4; }
.full, .pegman, .zoom { position: absolute; background: #fff; display: flex; align-items: center; justify-content: center; }
.full { left: 3222px; top: 20px; width: 50px; height: 50px; }
.pegman { left: 3224px; top: 566px; width: 56px; height: 56px; border-radius: 4px; box-shadow: 0 2px 5px rgba(0,0,0,.3); }
.zoom { left: 3224px; top: 642px; width: 56px; height: 110px; border-radius: 4px; box-shadow: 0 2px 5px rgba(0,0,0,.3); flex-direction: column; padding-top: 15px; padding-left: 2px; }
.zoom svg { flex: 1; }
.zoom hr { width: 36px; height: 2px; margin: -17px 0 0; border: 0; background: #e3e3e3; flex: none; }
.credits {
  position: absolute; right: 0; bottom: 0; height: 28px; display: flex;
  background: rgba(245,245,245,.7); font-size: 20px; line-height: 27px; color: #444; white-space: nowrap;
}
.credits span { padding: 0 12px 0 11px; letter-spacing: -.03px; }
.credits span + span { border-left: 1px solid #e8e6df; }

.tables { display: flex; gap: 80px; align-items: flex-start; padding-top: 40px; }
table { border-collapse: collapse; table-layout: fixed; font-size: 32px; }
.details { width: 664px; }
.places { width: 446px; }
.c1 { width: 334px; }
.c2 { width: 328px; }
.c3 { width: 208px; }
.c4 { width: 236px; }
th, td { border: 2px solid #000; padding: 0 0 0 16px; line-height: 44px; white-space: nowrap; }
th { height: 70px; padding: 1px 0 0; background: #e5a67a; font-weight: 700; letter-spacing: .3px; }
td { height: 134px; background: linear-gradient(90deg, #f5f4dd, #f8f8e5 22%, #f6f6e3 75%, #f4f3dc); letter-spacing: .15px; word-spacing: 3px; }
.num { letter-spacing: 1.900px; word-spacing: 0; }
```
